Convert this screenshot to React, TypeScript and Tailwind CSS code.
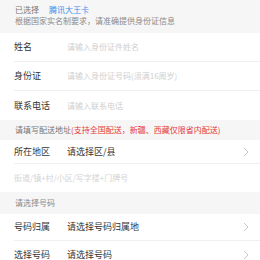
import React from "react";

const Chevron = () => (
  <svg width="6" height="10" viewBox="0 0 6 10" className="shrink-0">
    <path d="M1 1l4 4-4 4" fill="none" stroke="#c8c8c8" strokeWidth="1" />
  </svg>
);

const Row = ({ label, children, chevron, divider = true, h = "h-[29px]" }: { label: string; children: React.ReactNode; chevron?: boolean; divider?: boolean; h?: string }) => (
  <div className="pl-[14px] bg-white">
    <div className={`flex items-center ${h} pr-[11px] ${divider ? "border-b border-[#efefef]" : ""}`}>
      <div className="w-[53px] text-[9px] text-[#333]">{label}</div>
      <div className="flex-1 text-[8px]">{children}</div>
      {chevron && <Chevron />}
    </div>
  </div>
);

export default function App() {
  return (
    <div className="w-[260px] h-[260px] overflow-hidden bg-white" style={{ fontFamily: '"Noto Sans CJK SC", "Noto Sans", sans-serif' }}>
      <div className="bg-[#f6f6f6] h-[33px] pl-[15px] pt-[4px] leading-[11px] text-[8px]">
        <div>
          <span className="text-[#777]">已选择</span>
          <span className="ml-[10px] text-[#3d8ef0]">腾讯大王卡</span>
        </div>
        <div className="text-[#8a8a8a]">根据国家实名制要求，请准确提供身份证信息</div>
      </div>
      <Row label="姓名"><span className="text-[#cfcfcf]">请输入身份证件姓名</span></Row>
      <Row label="身份证"><span className="text-[#cfcfcf]">请输入身份证号码(须满16周岁)</span></Row>
      <Row label="联系电话" divider={false}><span className="text-[#cfcfcf]">请输入联系电话</span></Row>
      <div className="bg-[#f6f6f6] h-[20px] flex items-center pl-[15px] text-[8px]">
        <span className="text-[#777]">请填写配送地址</span>
        <span className="text-[#e5393a]">(支持全国配送，新疆、西藏仅限省内配送)</span>
      </div>
      <div className="pl-[14px] bg-white">
        <div className="flex items-center h-[24px] pr-[11px] border-b border-[#efefef]">
          <div className="w-[53px] text-[9px] text-[#333]">所在地区</div>
          <div className="flex-1 text-[9px] text-[#333]">请选择区/县</div>
          <Chevron />
        </div>
      </div>
      <div className="h-[28px] flex items-center pl-[14px] text-[8px] text-[#d4d4d4]">街道/镇+村/小区/写字楼+门牌号</div>
      <div className="bg-[#f6f6f6] h-[22px] flex items-center pl-[15px] text-[8px] text-[#8a8a8a]">请选择号码</div>
      <Row label="号码归属" chevron h="h-[27px]"><span className="text-[9px] text-[#333]">请选择号码归属地</span></Row>
      <Row label="选择号码" chevron divider={false} h="h-[27px]"><span className="text-[9px] text-[#333]">请选择号码</span></Row>
    </div>
  );
}
